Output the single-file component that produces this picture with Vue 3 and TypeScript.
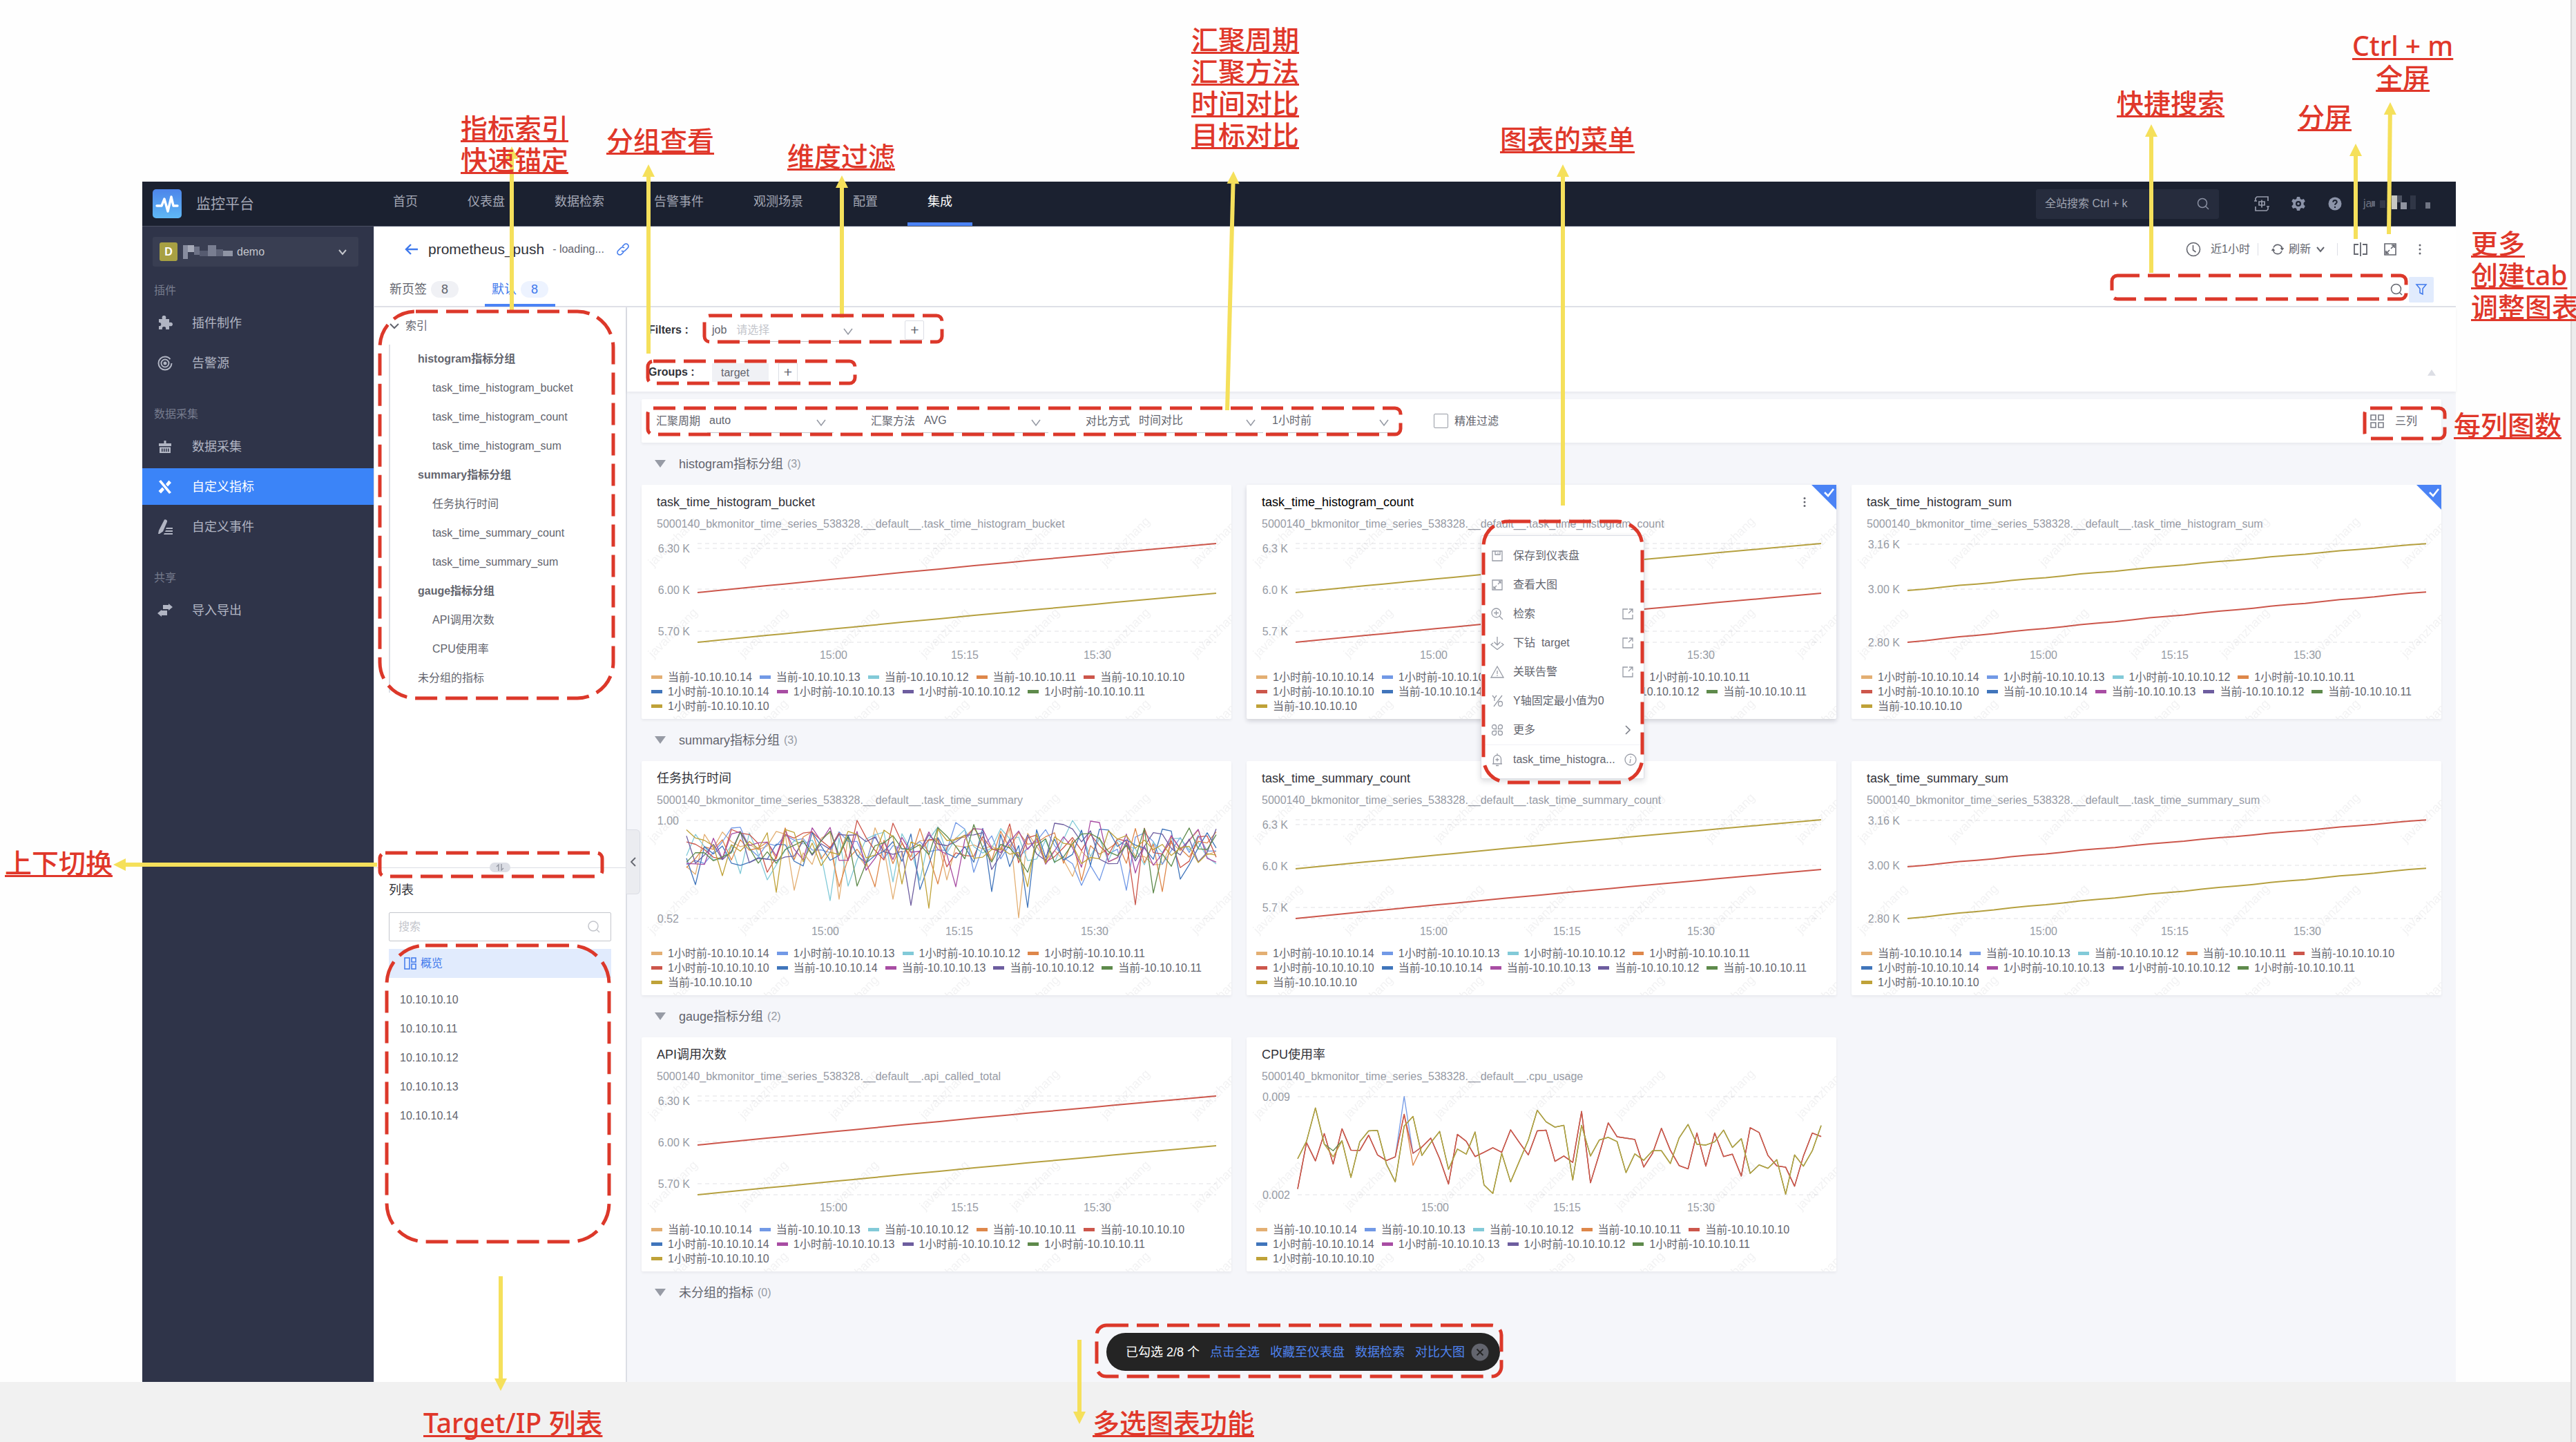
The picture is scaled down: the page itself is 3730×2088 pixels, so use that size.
<script setup lang="ts">
import { ref } from 'vue'

interface Series { color: string; points: string; width: number }
interface Tick { at: number; text: string }
interface Chart {
  title: string
  metric: string
  left: number
  rows: number[]
  yTicks: Tick[]
  xTicks: Tick[]
  series: Series[]
  currentFirst: boolean
  checked?: boolean
  hovered?: boolean
}
interface Group { name: string; count: number; charts: Chart[] }

const palette = ['#e3af73', '#7299e6', '#82cad8', '#de874a', '#cc564b', '#4075bb', '#a84da3', '#6d5d9f', '#5e8a4b', '#bfa238']
const hosts = ['10.10.10.14', '10.10.10.13', '10.10.10.12', '10.10.10.11', '10.10.10.10']
const right = 832

function legendOf(chart: Chart) {
  const order = chart.currentFirst ? ['当前', '1小时前'] : ['1小时前', '当前']
  return order.flatMap((p, k) => hosts.map((h, i) => ({ text: `${p}-${h}`, color: palette[k * 5 + i] })))
}

function toPoints(values: number[], left: number): string {
  const step = (right - left) / (values.length - 1)
  return values.map((v, i) => `${(left + i * step).toFixed(1)},${v.toFixed(1)}`).join(' ')
}

function trend(from: number, to: number, left: number, wobble: number): string {
  const values = Array.from({ length: 31 }, (_, i) => {
    const t = i / 30
    return from + (to - from) * t - Math.sin(t * Math.PI) + Math.sin(i * 1.7) * wobble
  })
  return toPoints(values, left)
}

function rising(title: string, metric: string, kind: 'k2' | 'k1' | 'sum', currentFirst: boolean, extra: Partial<Chart> = {}): Chart {
  const left = kind === 'k1' ? 71 : 81
  const wobble = kind === 'sum' ? 0.35 : 0
  const upper = currentFirst ? palette[4] : '#b5a03f'
  const lower = currentFirst ? '#b5a03f' : palette[4]
  return {
    title,
    metric,
    left,
    currentFirst,
    rows: kind === 'sum' ? [86, 151, 228] : [85, 92, 151, 212, 228],
    yTicks:
      kind === 'sum'
        ? [{ at: 86, text: '3.16 K' }, { at: 151, text: '3.00 K' }, { at: 228, text: '2.80 K' }]
        : kind === 'k2'
          ? [{ at: 92, text: '6.30 K' }, { at: 152, text: '6.00 K' }, { at: 212, text: '5.70 K' }]
          : [{ at: 92, text: '6.3 K' }, { at: 152, text: '6.0 K' }, { at: 212, text: '5.7 K' }],
    xTicks:
      kind === 'k1'
        ? [{ at: 271, text: '15:00' }, { at: 464, text: '15:15' }, { at: 658, text: '15:30' }]
        : [{ at: 278, text: '15:00' }, { at: 468, text: '15:15' }, { at: 660, text: '15:30' }],
    series: [
      { color: upper, points: trend(kind === 'sum' ? 153 : 156, 85, left, wobble), width: 2 },
      { color: lower, points: trend(228, kind === 'sum' ? 155 : 157, left, wobble), width: 2 },
    ],
    ...extra,
  }
}

/* Per-series dips of the duration chart: [sample index, plot height] */
const dips: number[][][] = [
  [[1, 164], [12, 187], [17, 200], [23, 200], [37, 227], [43, 167], [29, 172]],
  [[44, 180], [49, 187], [32, 161], [46, 173], [30, 89]],
  [[6, 163], [9, 172], [16, 202], [18, 181], [23, 175], [26, 173], [43, 86]],
  [[17, 182], [21, 182], [28, 178], [44, 173], [53, 189]],
  [[9, 161], [50, 208], [19, 86], [23, 90], [36, 91]],
  [[1, 179], [26, 186], [34, 189], [38, 212], [55, 171]],
  [[30, 182], [20, 158], [45, 87], [46, 89], [50, 162]],
  [[25, 209], [34, 157], [41, 90], [42, 92]],
  [[19, 181], [52, 191], [32, 92], [38, 161]],
  [[4, 166], [10, 190], [27, 213], [38, 182], [24, 178]],
]

function durationSeries(): Series[] {
  let seed = 20231
  const next = () => {
    seed = (seed * 1103515245 + 12345) % 2147483648
    return seed / 2147483648
  }
  return palette.map((color, s) => {
    const values = Array.from({ length: 60 }, () => 93 + 55 * next() + 8 * next())
    dips[s].forEach(([i, v]) => { values[i] = v })
    return { color, points: toPoints(values, 65), width: 1.3 }
  })
}

const cpuHour = [510, 445, 320, 455, 503, 443, 580, 447, 406, 404, 530, 597, 388, 352, 498, 450, 408, 550, 474, 493, 410, 608, 640, 490, 597, 518, 440, 329, 372, 392, 385, 590, 385, 500, 440, 430, 446, 562, 492, 516, 480, 480, 528, 432, 382, 456, 459, 447, 403, 468, 435, 565, 533, 546, 514, 643, 496, 538, 480, 386]
const cpuNow = [623, 450, 518, 416, 530, 398, 478, 479, 422, 496, 517, 503, 344, 490, 466, 433, 510, 605, 419, 445, 502, 486, 469, 486, 402, 450, 496, 406, 403, 520, 500, 524, 333, 600, 492, 376, 428, 433, 438, 541, 490, 396, 478, 536, 548, 414, 538, 414, 502, 493, 575, 394, 412, 498, 537, 542, 613, 500, 414, 427]
const cpuScale = (v: number) => 86 + ((v - 278) * 142) / 367
const swap = (list: number[], i: number, v: number) => list.map((x, k) => (k === i ? v : x))

const groups: Group[] = [
  {
    name: 'histogram指标分组',
    count: 3,
    charts: [
      rising('task_time_histogram_bucket', 'task_time_histogram_bucket', 'k2', true),
      rising('task_time_histogram_count', 'task_time_histogram_count', 'k1', false, { checked: true, hovered: true }),
      rising('task_time_histogram_sum', 'task_time_histogram_sum', 'sum', false, { checked: true }),
    ],
  },
  {
    name: 'summary指标分组',
    count: 3,
    charts: [
      {
        title: '任务执行时间',
        metric: 'task_time_summary',
        left: 65,
        rows: [86, 228],
        yTicks: [{ at: 86, text: '1.00' }, { at: 228, text: '0.52' }],
        xTicks: [{ at: 266, text: '15:00' }, { at: 460, text: '15:15' }, { at: 656, text: '15:30' }],
        series: durationSeries(),
        currentFirst: false,
      },
      rising('task_time_summary_count', 'task_time_summary_count', 'k1', false),
      rising('task_time_summary_sum', 'task_time_summary_sum', 'sum', true),
    ],
  },
  {
    name: 'gauge指标分组',
    count: 2,
    charts: [
      rising('API调用次数', 'api_called_total', 'k2', true),
      {
        title: 'CPU使用率',
        metric: 'cpu_usage',
        left: 74,
        rows: [86, 228],
        yTicks: [{ at: 86, text: '0.009' }, { at: 228, text: '0.002' }],
        xTicks: [{ at: 273, text: '15:00' }, { at: 464, text: '15:15' }, { at: 658, text: '15:30' }],
        series: [
          { color: palette[1], points: toPoints(swap(cpuNow, 12, 277).map(cpuScale), 74), width: 1.3 },
          { color: palette[3], points: toPoints(swap(cpuNow, 13, 535).map(cpuScale), 74), width: 1.3 },
          { color: palette[4], points: toPoints(cpuNow.map(cpuScale), 74), width: 1.5 },
          { color: palette[8], points: toPoints(swap(cpuHour, 4, 480).map(cpuScale), 74), width: 1.3 },
          { color: '#b5a03f', points: toPoints(cpuHour.map(cpuScale), 74), width: 1.5 },
        ],
        currentFirst: true,
      },
    ],
  },
  { name: '未分组的指标', count: 0, charts: [] },
]

const nav = ['首页', '仪表盘', '数据检索', '告警事件', '观测场景', '配置', '集成']

const sideGroups = [
  { title: '插件', items: [{ name: '插件制作', icon: 'plugin' }, { name: '告警源', icon: 'source' }] },
  { title: '数据采集', items: [{ name: '数据采集', icon: 'collect' }, { name: '自定义指标', icon: 'metric' }, { name: '自定义事件', icon: 'event' }] },
  { title: '共享', items: [{ name: '导入导出', icon: 'transfer' }] },
]

const index = [
  { text: 'histogram指标分组', level: 'group' },
  { text: 'task_time_histogram_bucket', level: 'leaf' },
  { text: 'task_time_histogram_count', level: 'leaf' },
  { text: 'task_time_histogram_sum', level: 'leaf' },
  { text: 'summary指标分组', level: 'group' },
  { text: '任务执行时间', level: 'leaf' },
  { text: 'task_time_summary_count', level: 'leaf' },
  { text: 'task_time_summary_sum', level: 'leaf' },
  { text: 'gauge指标分组', level: 'group' },
  { text: 'API调用次数', level: 'leaf' },
  { text: 'CPU使用率', level: 'leaf' },
  { text: '未分组的指标', level: 'plain' },
]

const targets = ['10.10.10.10', '10.10.10.11', '10.10.10.12', '10.10.10.13', '10.10.10.14']

const menu = [
  { text: '保存到仪表盘', icon: 'save', tail: '' },
  { text: '查看大图', icon: 'expand', tail: '' },
  { text: '检索', icon: 'search', tail: 'jump' },
  { text: '下钻  target', icon: 'drill', tail: 'jump' },
  { text: '关联告警', icon: 'alert', tail: 'jump' },
  { text: 'Y轴固定最小值为0', icon: 'axis', tail: '' },
  { text: '更多', icon: 'more', tail: 'arrow' },
]

const keyword = ref('')
const globalKeyword = ref('')
const targetKeyword = ref('')
const exact = ref(false)

/* Guide layer: callout texts, dashed frames and arrows on the free canvas */
const notes = [
  { lines: ['指标索引', '快速锚定'], x: 667, y: 162 },
  { lines: ['分组查看'], x: 878, y: 180 },
  { lines: ['维度过滤'], x: 1140, y: 203 },
  { lines: ['汇聚周期', '汇聚方法', '时间对比', '目标对比'], x: 1725, y: 34 },
  { lines: ['图表的菜单'], x: 2172, y: 178 },
  { lines: ['快捷搜索'], x: 3065, y: 126 },
  { lines: ['分屏'], x: 3327, y: 146 },
  { lines: ['Ctrl + m', '全屏'], x: 3406, y: 43 },
  { lines: ['更多', '创建tab', '调整图表'], x: 3578, y: 329 },
  { lines: ['每列图数'], x: 3553, y: 592 },
  { lines: ['上下切换'], x: 7, y: 1226 },
  { lines: ['Target/IP 列表'], x: 613, y: 2037 },
  { lines: ['多选图表功能'], x: 1582, y: 2037 },
]

const frames = [
  { x: 550, y: 451, w: 338, h: 560, r: 52 },
  { x: 1020, y: 457, w: 344, h: 38, r: 8 },
  { x: 938, y: 523, w: 300, h: 32, r: 8 },
  { x: 938, y: 591, w: 1090, h: 38, r: 8 },
  { x: 2148, y: 755, w: 230, h: 378, r: 36 },
  { x: 3058, y: 399, w: 426, h: 34, r: 8 },
  { x: 3424, y: 591, w: 116, h: 44, r: 8 },
  { x: 550, y: 1235, w: 322, h: 34, r: 8 },
  { x: 560, y: 1369, w: 322, h: 429, r: 56 },
  { x: 1588, y: 1919, w: 586, h: 74, r: 14 },
]

const arrows = [
  { from: [741, 449], to: [741, 212] },
  { from: [939, 512], to: [939, 238] },
  { from: [1219, 460], to: [1219, 254] },
  { from: [1777, 594], to: [1786, 248] },
  { from: [2263, 732], to: [2263, 238] },
  { from: [3115, 395], to: [3115, 180] },
  { from: [3411, 346], to: [3411, 208] },
  { from: [3459, 339], to: [3461, 148] },
  { from: [546, 1252], to: [164, 1252] },
  { from: [725, 1848], to: [725, 2014] },
  { from: [1563, 1940], to: [1563, 2062] },
].map(({ from, to }) => {
  const len = Math.hypot(to[0] - from[0], to[1] - from[1])
  const ux = (to[0] - from[0]) / len
  const uy = (to[1] - from[1]) / len
  const bx = to[0] - ux * 18
  const by = to[1] - uy * 18
  return {
    x1: from[0],
    y1: from[1],
    x2: bx,
    y2: by,
    head: `${to[0]},${to[1]} ${bx - uy * 9},${by + ux * 9} ${bx + uy * 9},${by - ux * 9}`,
  }
})
</script>

<template>
  <div class="page">
    <div class="stage">
      <div class="app">
        <header class="topbar">
          <a class="brand" href="#">
            <svg class="logo" viewBox="0 0 42 42" aria-hidden="true">
              <defs>
                <linearGradient id="logoFill" x1="0" y1="0" x2="0" y2="1">
                  <stop offset="0" stop-color="#4d85ea" />
                  <stop offset="1" stop-color="#5fb8f5" />
                </linearGradient>
              </defs>
              <rect width="42" height="42" rx="5" fill="url(#logoFill)" />
              <path d="M6 24h7l4-10 5 18 5-21 3 13h6" fill="none" stroke="#fff" stroke-width="3.4" stroke-linejoin="round" stroke-linecap="round" />
            </svg>
            <span>监控平台</span>
          </a>
          <nav class="nav">
            <a v-for="n in nav" :key="n" href="#" :class="{ active: n === '集成' }">{{ n }}</a>
          </nav>
          <div class="top-right">
            <label class="site-search">
              <input v-model="globalKeyword" type="text" placeholder="全站搜索 Ctrl + k" aria-label="全站搜索" />
              <svg width="18" height="18" viewBox="0 0 18 18" fill="none" stroke="#8b91a3" stroke-width="1.5"><circle cx="8" cy="8" r="6.5" /><path d="M13 13l4 4" /></svg>
            </label>
            <button class="icon-btn" aria-label="语言">
              <svg width="24" height="24" viewBox="0 0 24 24" fill="none" stroke="#969bab" stroke-width="1.700"><path d="M3 8V4l2-2h16v6M1 8h4M21 16v4l-2 2H3v-6M19 16h4M8 9h8v5H8zM12 6.500v11" /></svg>
            </button>
            <button class="icon-btn" aria-label="设置">
              <svg width="24" height="24" viewBox="0 0 24 24" fill="#8b93a8"><path fill-rule="evenodd" d="M10 2h4l.8 3 2 1 3-.9 2 3.500-2.200 2.200v2.400l2.200 2.200-2 3.500-3-.9-2 1-.8 3h-4l-.8-3-2-1-3 .9-2-3.500 2.200-2.200v-2.400L2.200 8.600l2-3.500 3 .9 2-1zM12 8a4 4 0 100 8 4 4 0 000-8z" /><circle cx="12" cy="12" r="1.800" /></svg>
            </button>
            <button class="icon-btn" aria-label="帮助">
              <svg width="24" height="24" viewBox="0 0 24 24"><circle cx="12" cy="12" r="9.500" fill="#8b93a8" /><path d="M9.300 9.800a2.700 2.700 0 115.400 0c0 1.800-2.700 1.900-2.700 4M12 16v2" fill="none" stroke="#1b2130" stroke-width="2" /></svg>
            </button>
            <div class="user">
              <span>ja</span>
              <svg width="88" height="24" viewBox="0 0 88 24" aria-hidden="true">
                <rect x="0" y="8" width="5" height="8" fill="#5b6171" /><rect x="12" y="7" width="8" height="11" fill="#333949" /><rect x="29" y="0" width="8" height="20" fill="#c7c8c4" /><rect x="37" y="0" width="7" height="10" fill="#4c5261" /><rect x="42" y="10" width="9" height="10" fill="#9094a0" /><rect x="56" y="0" width="8" height="20" fill="#303646" /><rect x="78" y="10" width="7" height="9" fill="#6f7482" />
              </svg>
            </div>
          </div>
        </header>

        <div class="body">
          <aside class="sidebar">
            <button class="space">
              <span class="space-badge">D</span>
              <svg width="72" height="24" viewBox="0 0 72 24" aria-hidden="true">
                <rect x="0" y="2" width="7" height="20" fill="#878c9e" /><rect x="7" y="2" width="9" height="10" fill="#a6aab8" /><rect x="16" y="4" width="8" height="12" fill="#6d7286" /><rect x="24" y="10" width="12" height="8" fill="#565b70" /><rect x="36" y="2" width="12" height="16" fill="#797e91" /><rect x="48" y="8" width="10" height="10" fill="#5f6478" /><rect x="58" y="10" width="14" height="8" fill="#8f94a4" />
              </svg>
              <span class="space-name">demo</span>
              <svg width="14" height="14" viewBox="0 0 14 14" fill="none" stroke="#c4c6cc" stroke-width="2"><path d="M2 4l5 6 5-6" /></svg>
            </button>
            <section v-for="g in sideGroups" :key="g.title" class="side-group">
              <h2>{{ g.title }}</h2>
              <a v-for="it in g.items" :key="it.name + it.icon" href="#" :class="{ active: it.icon === 'metric' }">
                <svg width="24" height="24" viewBox="0 0 24 24" fill="currentColor" aria-hidden="true">
                  <path v-if="it.icon === 'plugin'" d="M3 6h5c-1-3 0-5 2.500-5S14 3 13 6h5v5c3-1 5 .2 5 2.500S21 17 18 16v5h-5c.7-2.500-.3-4-2.500-4S7.300 18.500 8 21H3v-5c2 .6 3.300-.6 3.300-2.500S5 10.500 3 11z" />
                  <g v-else-if="it.icon === 'source'" fill="none" stroke="currentColor" stroke-width="2"><circle cx="12" cy="12" r="9.500" stroke-dasharray="53 7" /><circle cx="12" cy="12" r="5.500" /><circle cx="12" cy="12" r="1.500" fill="currentColor" /></g>
                  <path v-else-if="it.icon === 'collect'" d="M10.500 3h3v4H21v4H3V7h7.500zM4 12.500h16V21H4zm3 2V19h1.500v-4.500zm3 0V19h1.500v-4.500zm3 0V19h1.500v-4.500zm3 0V19h1.500v-4.500z" fill-rule="evenodd" />
                  <path v-else-if="it.icon === 'metric'" d="M3 4l3-2 15 18-3 2zM17.500 2.500L21 6l-5 5.500-3-3.500zM8 12.500l3 3.500-5 5.500L2.500 18z" />
                  <path v-else-if="it.icon === 'event'" d="M11 1.500c2-.8 4.500.5 4 3l-6 14L4 22l-2 0 1-5zM14 13h9v2h-10zM13 17h10v2H12zM11 21h12v2H10z" />
                  <path v-else d="M9 4h8V2l6 5-6 5v-2H9zM15 12v7H7v2l-6-5 6-5v1z" />
                </svg>
                <span>{{ it.name }}</span>
              </a>
            </section>
          </aside>

          <div class="content">
            <header class="head">
              <div class="head-row">
                <button class="icon-btn" aria-label="返回">
                  <svg width="20" height="20" viewBox="0 0 20 20" fill="none" stroke="#3f79ec" stroke-width="2.400"><path d="M19 10H2M9 3l-7 7 7 7" /></svg>
                </button>
                <h1>prometheus_push</h1>
                <span class="loading">- loading...</span>
                <button class="icon-btn" aria-label="复制链接">
                  <svg width="18" height="18" viewBox="0 0 18 18" fill="none" stroke="#3f79ec" stroke-width="1.600"><path d="M8 5l3-3a3.500 3.500 0 015 5l-4 4a3.500 3.500 0 01-5 0M10 13l-3 3a3.500 3.500 0 01-5-5l4-4a3.500 3.500 0 015 0" /></svg>
                </button>
                <div class="tools">
                  <button class="tool time">
                    <svg width="22" height="22" viewBox="0 0 22 22" fill="none" stroke="#63656e" stroke-width="1.600"><circle cx="11" cy="11" r="9.500" /><path d="M10.500 5v7l4 3" /></svg>
                    <span>近1小时</span>
                  </button>
                  <i class="bar"></i>
                  <button class="tool refresh">
                    <svg width="18" height="18" viewBox="0 0 18 18" fill="none" stroke="#63656e" stroke-width="1.600"><path d="M3 6.500A6.500 6.500 0 0115.500 8M15 11.500A6.500 6.500 0 012.500 10M.5 11l2-2.500 2 2.500M13.500 7l2 2.500 2-2.500" /></svg>
                    <span>刷新</span>
                    <svg width="14" height="14" viewBox="0 0 14 14" fill="none" stroke="#63656e" stroke-width="2"><path d="M2 4l5 6 5-6" /></svg>
                  </button>
                  <i class="bar"></i>
                  <button class="tool split" aria-label="分屏">
                    <svg width="22" height="22" viewBox="0 0 22 22" fill="none" stroke="#63656e" stroke-width="1.800"><path d="M8 4H2v14h6M14 4h6v14h-6M11 1v20" /></svg>
                  </button>
                  <button class="tool full" aria-label="全屏">
                    <svg width="20" height="20" viewBox="0 0 20 20" fill="none" stroke="#63656e" stroke-width="1.600"><path d="M2 2h16v16H2zM11 9l5-5M12 4h4v4M9 11l-5 5M8 16H4v-4" /></svg>
                  </button>
                  <button class="tool dots" aria-label="更多">
                    <svg width="8" height="20" viewBox="0 0 8 20" fill="#63656e"><circle cx="4" cy="4" r="1.500" /><circle cx="4" cy="10" r="1.500" /><circle cx="4" cy="16" r="1.500" /></svg>
                  </button>
                </div>
              </div>
              <div class="tab-row">
                <button class="tab"><span>新页签</span><b>8</b></button>
                <button class="tab active"><span>默认</span><b>8</b></button>
                <label class="quick">
                  <input v-model="keyword" type="text" aria-label="快捷搜索" />
                  <svg width="18" height="18" viewBox="0 0 18 18" fill="none" stroke="#63656e" stroke-width="1.500"><circle cx="8.500" cy="8.500" r="7" /><path d="M13.500 13.500l3.500 3.500" /></svg>
                </label>
                <button class="funnel" aria-label="过滤">
                  <svg width="18" height="18" viewBox="0 0 18 18" fill="none" stroke="#3f79ec" stroke-width="1.500"><path d="M2 2h14l-5 6v8l-4-2V8z" /></svg>
                </button>
              </div>
            </header>

            <div class="columns">
              <aside class="panel">
                <div class="upper">
                  <button class="index-head">
                    <svg width="14" height="14" viewBox="0 0 14 14" fill="none" stroke="#63656e" stroke-width="2"><path d="M1 4l6 6 6-6" /></svg>
                    <span>索引</span>
                  </button>
                  <ul class="index">
                    <li v-for="row in index" :key="row.text" :class="row.level"><a href="#">{{ row.text }}</a></li>
                  </ul>
                </div>
                <div class="lower">
                  <button class="switch" aria-label="上下切换">
                    <svg width="12" height="10" viewBox="0 0 12 10" fill="none" stroke="#979ba5" stroke-width="1.500"><path d="M1 4l3-3v9M8 0v9l3-3" /></svg>
                  </button>
                  <h2>列表</h2>
                  <label class="find">
                    <input v-model="targetKeyword" type="text" placeholder="搜索" aria-label="搜索" />
                    <svg width="18" height="18" viewBox="0 0 18 18" fill="none" stroke="#c4c6cc" stroke-width="1.500"><circle cx="8" cy="8" r="7" /><path d="M13 13l4 4" /></svg>
                  </label>
                  <button class="overview">
                    <svg width="18" height="18" viewBox="0 0 18 18" fill="none" stroke="#3f79ec" stroke-width="1.500"><path d="M1 1h7v16H1zM11 1h6v6h-6zM11 10h6v7h-6z" /></svg>
                    <span>概览</span>
                  </button>
                  <ul class="targets">
                    <li v-for="t in targets" :key="t"><a href="#">{{ t }}</a></li>
                  </ul>
                </div>
              </aside>

              <main class="main">
                <button class="fold" aria-label="收起">
                  <svg width="8" height="14" viewBox="0 0 8 14" fill="none" stroke="#63656e" stroke-width="1.800"><path d="M7 1L1 7l6 6" /></svg>
                </button>

                <section class="filters">
                  <div class="filter-row">
                    <strong>Filters :</strong>
                    <label class="field-name" for="job">job</label>
                    <div class="pick">
                      <select id="job" class="empty"><option>请选择</option></select>
                      <svg width="14" height="14" viewBox="0 0 14 14" fill="none" stroke="#979ba5" stroke-width="1.600"><path d="M1 3l6 8 6-8" /></svg>
                    </div>
                    <button class="plus far" aria-label="添加过滤">+</button>
                  </div>
                  <div class="filter-row">
                    <strong>Groups :</strong>
                    <span class="chip">target</span>
                    <button class="plus" aria-label="添加分组">+</button>
                    <button class="collapse" aria-label="折叠">
                      <svg width="12" height="9" viewBox="0 0 12 9" fill="#dcdee5"><path d="M6 0l6 9H0z" /></svg>
                    </button>
                  </div>
                </section>

                <section class="toolbar">
                  <div class="field">
                    <label for="period">汇聚周期</label>
                    <div class="pick"><select id="period"><option>auto</option></select><svg width="14" height="14" viewBox="0 0 14 14" fill="none" stroke="#979ba5" stroke-width="1.600"><path d="M1 3l6 8 6-8" /></svg></div>
                  </div>
                  <div class="field">
                    <label for="method">汇聚方法</label>
                    <div class="pick"><select id="method"><option>AVG</option></select><svg width="14" height="14" viewBox="0 0 14 14" fill="none" stroke="#979ba5" stroke-width="1.600"><path d="M1 3l6 8 6-8" /></svg></div>
                  </div>
                  <div class="field">
                    <label for="compare">对比方式</label>
                    <div class="pick"><select id="compare"><option>时间对比</option></select><svg width="14" height="14" viewBox="0 0 14 14" fill="none" stroke="#979ba5" stroke-width="1.600"><path d="M1 3l6 8 6-8" /></svg></div>
                    <div class="pick"><select aria-label="对比时间"><option>1小时前</option></select><svg width="14" height="14" viewBox="0 0 14 14" fill="none" stroke="#979ba5" stroke-width="1.600"><path d="M1 3l6 8 6-8" /></svg></div>
                  </div>
                  <label class="exact"><input v-model="exact" type="checkbox" /><span>精准过滤</span></label>
                  <button class="per-row">
                    <svg width="20" height="20" viewBox="0 0 20 20" fill="none" stroke="#7b7e88" stroke-width="1.600"><path d="M1 1h7v7H1zM12 1h7v7h-7zM1 12h7v7H1zM12 12h7v7h-7z" /></svg>
                    <span>三列</span>
                  </button>
                </section>

                <section v-for="g in groups" :key="g.name" class="group">
                  <button class="group-head">
                    <svg width="16" height="11" viewBox="0 0 16 11" fill="#979ba5"><path d="M0 0h16L8 11z" /></svg>
                    <span>{{ g.name }}</span>
                    <small>({{ g.count }})</small>
                  </button>
                  <div class="grid">
                    <article v-for="c in g.charts" :key="c.title" class="card" :class="{ hovered: c.hovered }">
                      <h3>{{ c.title }}</h3>
                      <p>5000140_bkmonitor_time_series_538328.__default__.{{ c.metric }}</p>
                      <svg class="plot" viewBox="0 67 854 201">
                        <line v-for="r in c.rows" :key="r" :x1="c.left" :x2="right" :y1="r" :y2="r" stroke="#ebebee" stroke-width="1.500" stroke-dasharray="6 5" />
                        <polyline v-for="(s, i) in c.series" :key="i" :points="s.points" fill="none" :stroke="s.color" :stroke-width="s.width" stroke-linejoin="round" />
                        <text v-for="t in c.yTicks" :key="t.text" :x="c.left - 11" :y="t.at + 6" text-anchor="end">{{ t.text }}</text>
                        <text v-for="t in c.xTicks" :key="t.text" :x="t.at" y="252" text-anchor="middle">{{ t.text }}</text>
                      </svg>
                      <ul class="legend">
                        <li v-for="l in legendOf(c)" :key="l.text"><i :style="{ background: l.color }"></i>{{ l.text }}</li>
                      </ul>
                      <svg class="watermark" aria-hidden="true">
                        <defs>
                          <pattern id="mark" width="131" height="132" patternUnits="userSpaceOnUse">
                            <text x="46" y="88" text-anchor="middle" transform="rotate(-45 46 83)">javanzhang</text>
                          </pattern>
                        </defs>
                        <rect width="100%" height="100%" fill="url(#mark)" />
                      </svg>
                      <svg v-if="c.checked" class="corner" width="36" height="36" viewBox="0 0 36 36">
                        <path d="M0 0h36v36z" fill="#4b83f5" /><path d="M19 11l5 5 8-10" fill="none" stroke="#fff" stroke-width="2.600" />
                      </svg>
                      <button v-if="c.hovered" class="card-dots" aria-label="图表菜单">
                        <svg width="8" height="16" viewBox="0 0 8 16" fill="#63656e"><circle cx="4" cy="2.500" r="1.500" /><circle cx="4" cy="8" r="1.500" /><circle cx="4" cy="13.500" r="1.500" /></svg>
                      </button>
                      <div v-if="c.hovered" class="menu" role="menu">
                        <button v-for="m in menu" :key="m.text" role="menuitem">
                          <svg width="20" height="20" viewBox="0 0 20 20" fill="none" stroke="#979ba5" stroke-width="1.300" aria-hidden="true">
                            <path v-if="m.icon === 'save'" d="M3 3h14v14H3zM7 3v5h7V3M11 5v1.500" />
                            <path v-else-if="m.icon === 'expand'" d="M3 3h14v14H3zM11 9l4-4M12 5h3v3M9 11l-4 4M8 15H5v-3" />
                            <path v-else-if="m.icon === 'search'" d="M2 8.500a6.500 6.500 0 1013 0 6.500 6.500 0 10-13 0M13.500 13.500L18 18M5 8.500h7M8.500 5v7" />
                            <path v-else-if="m.icon === 'drill'" d="M10 1v12M5.500 8.500L10 13l4.500-4.500M4 10l-3 2.500 9 7 9-7-3-2.500" />
                            <path v-else-if="m.icon === 'alert'" d="M10 2l9 16H1zM10 8v5M10 14.500v1.500" />
                            <path v-else-if="m.icon === 'axis'" d="M3 2l3 4 3-4M6 6v4M17 2L5 18M11.500 14a3 3.500 0 106 0 3 3.500 0 10-6 0" />
                            <path v-else d="M8.500 8.500H5.500a3 3 0 113-3zM11.500 8.500V5.500a3 3 0 113 3zM8.500 11.500v3a3 3 0 11-3-3zM11.500 11.500h3a3 3 0 11-3 3z" />
                          </svg>
                          <span>{{ m.text }}</span>
                          <svg v-if="m.tail === 'jump'" width="18" height="18" viewBox="0 0 18 18" fill="none" stroke="#979ba5" stroke-width="1.300"><path d="M9 2H2v14h14v-6M11 2h5v5M16 2l-6 6" /></svg>
                          <svg v-else-if="m.tail === 'arrow'" width="18" height="18" viewBox="0 0 18 18" fill="none" stroke="#7b7e88" stroke-width="1.600"><path d="M6 3l6 6-6 6" /></svg>
                        </button>
                        <button class="last" role="menuitem">
                          <svg width="20" height="20" viewBox="0 0 20 20" fill="none" stroke="#979ba5" stroke-width="1.300"><path d="M3 16h14M4.500 16V9a5.500 5.500 0 0111 0v7M10 1v2.500M8 18.500h4M7.500 10h5M10 7.500v5" /></svg>
                          <span>task_time_histogra...</span>
                          <svg width="18" height="18" viewBox="0 0 18 18" fill="none" stroke="#979ba5" stroke-width="1.300"><circle cx="9" cy="9" r="8" /><path d="M9.500 4.500l-.3 1.500M9 8l-1 6" /></svg>
                        </button>
                      </div>
                    </article>
                  </div>
                </section>

                <div class="bulk">
                  <span>已勾选 2/8 个</span>
                  <a href="#">点击全选</a>
                  <a href="#">收藏至仪表盘</a>
                  <a href="#">数据检索</a>
                  <a href="#">对比大图</a>
                  <button class="icon-btn" aria-label="关闭">
                    <svg width="26" height="26" viewBox="0 0 26 26"><circle cx="13" cy="13" r="12.500" fill="#63656e" /><path d="M8.500 8.500l9 9M17.500 8.500l-9 9" stroke="#242424" stroke-width="1.800" /></svg>
                  </button>
                </div>
              </main>
            </div>
          </div>
        </div>
      </div>
    </div>
    <div class="floor"></div>

    <svg class="guide" aria-hidden="true">
      <g fill="#f5e05b" stroke="#f5e05b">
        <template v-for="(a, i) in arrows" :key="i">
          <line :x1="a.x1" :y1="a.y1" :x2="a.x2" :y2="a.y2" stroke-width="6" />
          <polygon :points="a.head" stroke="none" />
        </template>
      </g>
      <rect v-for="(f, i) in frames" :key="i" :x="f.x" :y="f.y" :width="f.w" :height="f.h" :rx="f.r" fill="none" stroke="#dc382a" stroke-width="5" stroke-dasharray="32 12" />
    </svg>
    <p v-for="n in notes" :key="n.lines[0]" class="note" :style="{ left: n.x + 'px', top: n.y + 'px' }">
      <span v-for="l in n.lines" :key="l">{{ l }}</span>
    </p>
  </div>
</template>

<style>
body {
  margin: 0;
}
</style>

<style scoped>
.page {
  position: relative;
  display: flex;
  flex-direction: column;
  min-height: 100vh;
  overflow: hidden;
  background: #fefefe;
  color: #63656e;
  font-family: "Liberation Sans", "Noto Sans CJK SC", sans-serif;
  font-size: 16px;
  line-height: 20px;
}
.page::after {
  content: "";
  position: absolute;
  top: 0;
  right: 0;
  bottom: 0;
  width: 6px;
  background: #ededed;
  border-left: 2px solid #d9d9d9;
}
.page *,
.page *::before,
.page *::after {
  box-sizing: border-box;
}
h1, h2, h3, p, ul {
  margin: 0;
  padding: 0;
  font-weight: 400;
}
ul {
  list-style: none;
}
a {
  color: inherit;
  text-decoration: none;
}
button {
  padding: 0;
  border: 0;
  background: none;
  color: inherit;
  font: inherit;
  text-align: left;
}
input, select {
  font: inherit;
  color: inherit;
}
svg {
  display: block;
  flex: none;
}
.stage {
  flex: 1;
  display: flex;
  padding: 263px 174px 0 206px;
}
.floor {
  height: 87px;
  background: #f1f1f1;
}
.app {
  flex: 1;
  min-width: 0;
  display: flex;
  flex-direction: column;
}
.topbar {
  display: flex;
  align-items: center;
  height: 65px;
  padding: 0 33px 0 15px;
  background: #1b2130;
  border-bottom: 1px solid #4b5164;
  color: #a3a7b5;
}
.brand {
  display: flex;
  align-items: center;
  gap: 21px;
  width: 319px;
  font-size: 21px;
}
.logo {
  width: 42px;
  height: 42px;
}
.nav {
  display: flex;
  align-self: stretch;
  gap: 14px;
  font-size: 18px;
}
.nav a {
  padding: 0 29px;
  line-height: 59px;
  border-bottom: 5px solid transparent;
}
.nav a.active {
  color: #fff;
  border-color: #4b83f5;
}
.top-right {
  display: flex;
  align-items: center;
  gap: 29px;
  margin-left: auto;
}
.site-search {
  display: flex;
  align-items: center;
  width: 265px;
  height: 43px;
  margin-right: 21px;
  padding: 0 14px 0 13px;
  background: #262c3d;
  border-radius: 3px;
}
.site-search input {
  flex: 1;
  min-width: 0;
  padding: 0;
  border: 0;
  background: none;
}
.site-search input::placeholder {
  color: #a0a4b1;
}
.user {
  display: flex;
  align-items: center;
  width: 101px;
  color: #6c7282;
}
.body {
  flex: 1;
  display: flex;
}
.sidebar {
  flex: none;
  width: 335px;
  padding-top: 15px;
  background: #2f3449;
}
.space {
  display: flex;
  align-items: center;
  width: 298px;
  height: 43px;
  margin: 0 15px 14px;
  padding: 0 16px 0 10px;
  background: #393e52;
  border-radius: 3px;
  color: #c4c6cc;
}
.space-badge {
  width: 26px;
  height: 27px;
  margin-right: 8px;
  border-radius: 3px;
  background: #a7a043;
  color: #fff;
  font-weight: 700;
  line-height: 27px;
  text-align: center;
}
.space-name {
  flex: 1;
  padding-left: 6px;
}
.side-group h2 {
  height: 41px;
  padding-left: 17px;
  font-size: 16px;
  line-height: 41px;
  color: #777c8e;
}
.side-group {
  margin-bottom: 27px;
}
.side-group a {
  display: flex;
  align-items: center;
  gap: 27px;
  height: 53px;
  margin-bottom: 5px;
  padding-left: 21px;
  color: #b1b5c3;
  font-size: 18px;
}
.side-group a.active {
  background: #3b84f8;
  color: #fff;
}
.content {
  flex: 1;
  min-width: 0;
  display: flex;
  flex-direction: column;
}
.head {
  height: 117px;
  border-bottom: 2px solid #dfe0e7;
  border-left: 1px solid #dcdee5;
  background: #fff;
}
.head-row {
  display: flex;
  align-items: center;
  height: 66px;
  padding: 0 48px 0 44px;
}
h1 {
  margin: 0 12px 0 14px;
  color: #313238;
  font-size: 21px;
  line-height: 26px;
}
.loading {
  margin-right: 18px;
}
.tools {
  display: flex;
  align-items: center;
  margin-left: auto;
}
.tool {
  display: flex;
  align-items: center;
}
.time {
  gap: 14px;
  margin-right: 11px;
}
.bar {
  width: 1px;
  height: 18px;
  background: #dcdee5;
}
.refresh {
  gap: 7px;
  margin: 0 17px 0 19px;
}
.split {
  margin: 0 22px;
}
.full {
  margin-right: 29px;
}
.tab-row {
  display: flex;
  align-items: center;
  height: 50px;
  padding: 0 32px 0 12px;
}
.tab {
  display: flex;
  align-items: center;
  gap: 6px;
  height: 50px;
  margin-right: 28px;
  padding: 4px 10px 0;
  border-bottom: 4px solid transparent;
  font-size: 18px;
}
.tab b {
  width: 40px;
  height: 24px;
  border-radius: 12px;
  background: #f0f1f5;
  font-weight: 400;
  line-height: 24px;
  text-align: center;
}
.tab.active {
  border-color: #4b83f5;
  color: #3f79ec;
}
.tab.active b {
  background: #edf3ff;
}
.quick {
  display: flex;
  align-items: center;
  width: 420px;
  height: 30px;
  margin-left: auto;
  padding-right: 5px;
}
.quick input {
  flex: 1;
  min-width: 0;
  border: 0;
  background: none;
}
.funnel {
  display: grid;
  place-items: center;
  width: 36px;
  height: 37px;
  margin-left: 4px;
  border-radius: 2px;
  background: #e1ebfd;
}
.columns {
  flex: 1;
  display: flex;
}
.panel {
  flex: none;
  display: grid;
  grid-template-rows: 812fr 745fr;
  width: 367px;
  border-left: 1px solid #dcdee5;
  border-right: 2px solid #dcdee5;
  background: #fff;
}
.index-head {
  display: flex;
  align-items: center;
  gap: 9px;
  height: 54px;
  padding-left: 22px;
}
.index {
  margin-left: 21px;
  border-left: 2px solid #dcdee5;
}
.index li {
  height: 42px;
  padding-left: 40px;
  line-height: 42px;
}
.index .group {
  font-weight: 700;
}
.index .leaf {
  padding-left: 61px;
}
.lower {
  position: relative;
  padding: 20px 21px 0;
  border-top: 1px solid #dcdee5;
}
.switch {
  position: absolute;
  top: -8px;
  left: 50%;
  display: grid;
  place-items: center;
  width: 30px;
  height: 14px;
  margin-left: -15px;
  border-radius: 7px;
  background: #dcdee5;
}
.lower h2 {
  margin-bottom: 20px;
  color: #313238;
  font-size: 18px;
  line-height: 24px;
}
.find {
  display: flex;
  align-items: center;
  height: 42px;
  padding: 0 15px 0 13px;
  border: 1px solid #c4c6cc;
  border-radius: 2px;
}
.find input {
  flex: 1;
  min-width: 0;
  padding: 0;
  border: 0;
  background: none;
}
.find input::placeholder {
  color: #c4c6cc;
}
.overview {
  display: flex;
  align-items: center;
  gap: 6px;
  width: 100%;
  height: 42px;
  margin: 11px 0;
  padding-left: 22px;
  background: #e1ebfd;
  color: #3f79ec;
}
.targets li {
  height: 42px;
  padding-left: 16px;
  line-height: 42px;
}
.main {
  position: relative;
  flex: 1;
  min-width: 0;
  background: #f5f6fa;
}
.fold {
  position: absolute;
  top: 756px;
  left: -1px;
  display: grid;
  place-items: center;
  width: 20px;
  height: 94px;
  border: 1px solid #dcdee5;
  border-left: 0;
  border-radius: 0 6px 6px 0;
  background: #ebecf0;
}
.filters {
  padding: 16px 29px 11px 31px;
  background: #fff;
  box-shadow: 0 2px 4px rgba(25, 25, 41, 0.06);
}
.filter-row {
  display: flex;
  align-items: center;
  height: 34px;
}
.filter-row + .filter-row {
  margin-top: 27px;
}
.filter-row strong {
  width: 92px;
  color: #313238;
}
.field-name {
  margin-right: 11px;
}
.pick {
  position: relative;
  width: 183px;
}
.pick select {
  width: 100%;
  height: 34px;
  padding: 0 30px 0 3px;
  border: 0;
  border-bottom: 1px solid #c4c6cc;
  border-radius: 0;
  background: none;
  appearance: none;
}
.pick select.empty {
  color: #c4c6cc;
}
.pick svg {
  position: absolute;
  top: 12px;
  right: 11px;
  pointer-events: none;
}
.plus {
  width: 28px;
  height: 28px;
  margin-left: 14px;
  border: 1px solid #dcdee5;
  border-radius: 2px;
  background: #fff;
  font-size: 21px;
  line-height: 24px;
  text-align: center;
}
.plus.far {
  margin-left: 64px;
}
.chip {
  width: 82px;
  height: 27px;
  padding-left: 13px;
  background: #f0f1f5;
  line-height: 27px;
}
.collapse {
  margin-left: auto;
}
.toolbar {
  display: flex;
  align-items: center;
  gap: 54px;
  height: 63px;
  margin: 11px 21px 0;
  padding: 0 35px 0 21px;
  border-radius: 2px;
  background: #fff;
  box-shadow: 0 2px 4px rgba(25, 25, 41, 0.06);
}
.field {
  display: flex;
  align-items: center;
  gap: 10px;
}
.exact {
  display: flex;
  align-items: center;
  gap: 9px;
}
.exact input {
  width: 21px;
  height: 21px;
  margin: 0;
  border: 1px solid #979ba5;
  border-radius: 2px;
  appearance: none;
}
.exact input:checked {
  background: #3b84f8;
}
.per-row {
  display: flex;
  align-items: center;
  gap: 16px;
  margin-left: auto;
}
.group-head {
  display: flex;
  align-items: center;
  height: 61px;
  margin-left: 40px;
  font-size: 18px;
}
.group-head span {
  margin: 0 6px 0 19px;
}
.group-head small {
  color: #979ba5;
  font-size: 16px;
}
.grid {
  display: grid;
  grid-template-columns: repeat(3, minmax(0, 1fr));
  gap: 22px;
  margin: 0 21px;
}
.card {
  position: relative;
  height: 339px;
  padding-top: 13px;
  border-radius: 2px;
  background: #fff;
  box-shadow: 0 2px 4px rgba(25, 25, 41, 0.06);
}
.card.hovered {
  z-index: 2;
  box-shadow: 0 3px 6px rgba(25, 25, 41, 0.16);
}
h3 {
  padding-left: 22px;
  color: #313238;
  font-size: 18px;
  line-height: 24px;
}
.hovered h3 {
  color: #000;
}
.card p {
  margin-top: 10px;
  padding-left: 22px;
  color: #979ba5;
}
.plot {
  width: 100%;
}
.plot text {
  fill: #979ba5;
  font-size: 16px;
}
.legend {
  display: flex;
  flex-wrap: wrap;
  column-gap: 11px;
  padding: 0 14px;
}
.legend li {
  display: flex;
  align-items: center;
  gap: 8px;
  line-height: 21px;
}
.legend i {
  width: 16px;
  height: 5px;
}
.watermark {
  position: absolute;
  top: 0;
  left: 0;
  width: 100%;
  height: 100%;
  pointer-events: none;
}
.watermark text {
  fill: rgba(90, 90, 100, 0.08);
  font-size: 18px;
}
.corner {
  position: absolute;
  top: 0;
  right: 0;
}
.card-dots {
  position: absolute;
  top: 17px;
  right: 42px;
}
.menu {
  position: absolute;
  top: 73px;
  left: 339px;
  width: 237px;
  padding: 8px 0 6px;
  border: 1px solid #dcdee5;
  border-radius: 2px;
  background: #fff;
  box-shadow: 0 3px 8px rgba(25, 25, 41, 0.16);
}
.menu button {
  display: flex;
  align-items: center;
  gap: 13px;
  width: 100%;
  height: 42px;
  padding: 0 14px 0 13px;
}
.menu button span {
  flex: 1;
  white-space: pre;
}
.menu .last {
  height: 43px;
  padding-right: 13px;
  border-top: 1px solid #f0f1f5;
}
.bulk {
  position: absolute;
  bottom: 16px;
  left: 694px;
  display: flex;
  align-items: center;
  gap: 15px;
  height: 55px;
  padding: 0 16px 0 28px;
  border-radius: 28px;
  background: #242424;
  color: #fff;
  font-size: 18px;
  white-space: nowrap;
}
.bulk a {
  color: #4f83ee;
}
.bulk button {
  margin-left: -6px;
}
.guide {
  position: absolute;
  top: 0;
  left: 0;
  width: 100%;
  height: 100%;
  z-index: 5;
  pointer-events: none;
}
.note {
  position: absolute;
  z-index: 6;
  display: flex;
  flex-direction: column;
  align-items: center;
  color: #e0372a;
  font-family: "Noto Sans", "Noto Sans CJK SC", sans-serif;
  font-size: 39px;
  font-weight: 500;
  line-height: 46px;
  white-space: nowrap;
}
.note span {
  align-self: flex-start;
  text-decoration: underline;
  text-decoration-thickness: 3px;
  text-decoration-skip-ink: none;
  text-underline-offset: 3px;
}
.note span:nth-last-child(1):nth-child(2) {
  align-self: center;
}
</style>
